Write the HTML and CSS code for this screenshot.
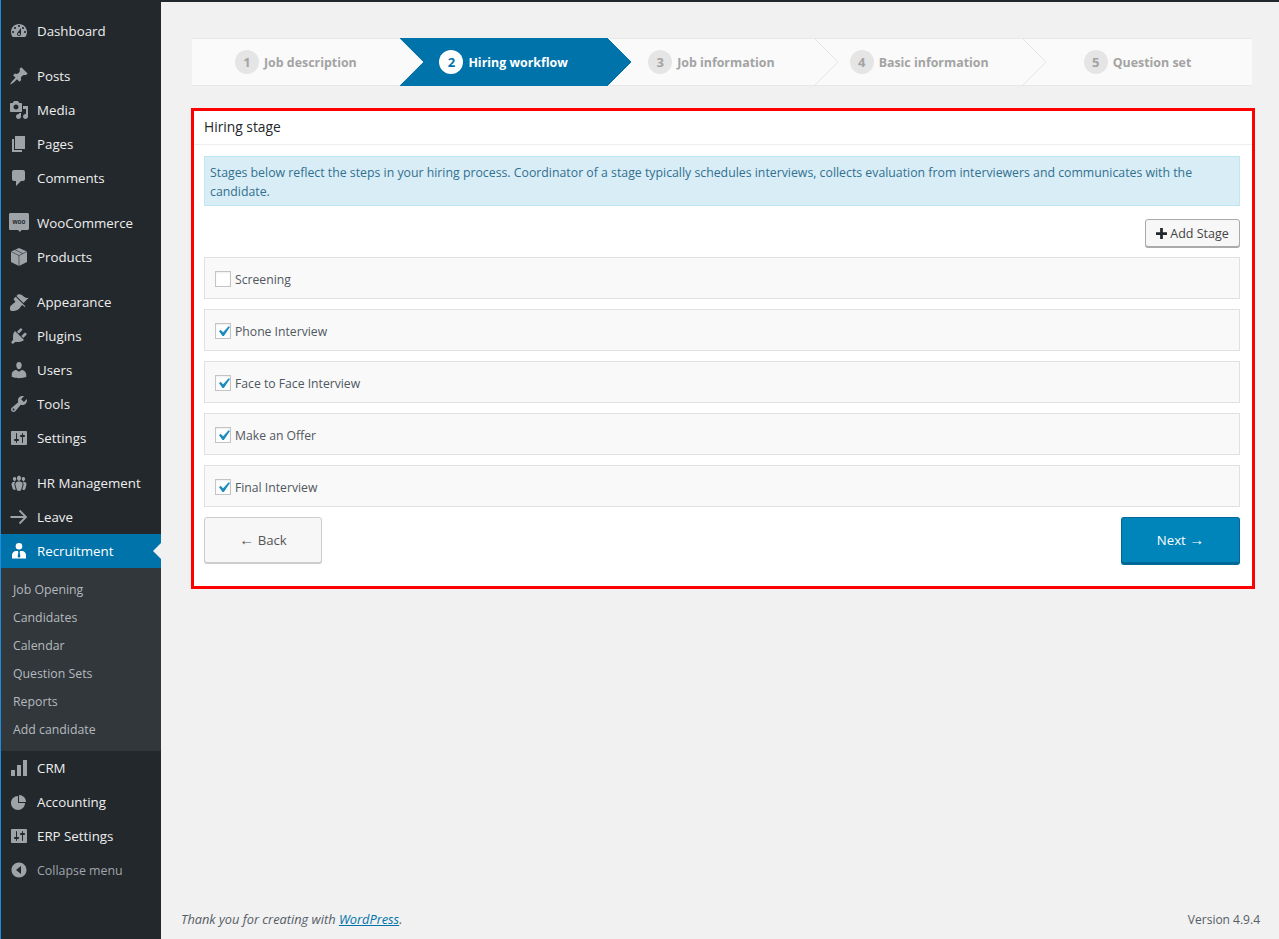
FILE: index.html
```html
<!DOCTYPE html>
<html lang="en">
<head>
<meta charset="utf-8">
<title>Hiring workflow</title>
<link rel="stylesheet" href="styles.css">
</head>
<body>
<div class="app">
  <nav class="sidebar">
    <a class="item"><svg class="ico" viewBox="0 0 20 20"><path d="M3.76 16h12.48c1.1-1.37 1.76-3.11 1.76-5 0-4.42-3.58-8-8-8s-8 3.58-8 8c0 1.89.66 3.63 1.76 5zM10 4c.55 0 1 .45 1 1s-.45 1-1 1-1-.45-1-1 .45-1 1-1zM6 6c.55 0 1 .45 1 1s-.45 1-1 1-1-.45-1-1 .45-1 1-1zm8 0c.55 0 1 .45 1 1s-.45 1-1 1-1-.45-1-1 .45-1 1-1zm-5.37 5.55L12 7v6c0 1.1-.9 2-2 2s-2-.9-2-2c0-.57.24-1.08.63-1.45zM4 10c.55 0 1 .45 1 1s-.45 1-1 1-1-.45-1-1 .45-1 1-1zm12 0c.55 0 1 .45 1 1s-.45 1-1 1-1-.45-1-1 .45-1 1-1zm-5 3c0-.55-.45-1-1-1s-1 .45-1 1 .45 1 1 1 1-.45 1-1z"/></svg>Dashboard</a>
    <div class="gap"></div>
    <a class="item"><svg class="ico" viewBox="0 0 20 20"><path d="M10.44 3.02l1.82-1.82 6.36 6.35-1.83 1.82c-1.05-.68-2.48-.57-3.41.36l-.75.75c-.92.93-1.04 2.35-.35 3.41l-1.83 1.82-2.41-2.41-2.8 2.79c-.42.42-3.38 2.71-3.8 2.29s1.86-3.39 2.28-3.81l2.79-2.79L4.1 9.36l1.83-1.82c1.05.69 2.48.57 3.4-.36l.75-.75c.93-.92 1.05-2.35.36-3.41z"/></svg>Posts</a>
    <a class="item"><svg class="ico" viewBox="0 0 20 20"><path d="M13 11V4c0-.55-.45-1-1-1h-1.67L9 1H5L3.67 3H2c-.55 0-1 .45-1 1v7c0 .55.45 1 1 1h10c.55 0 1-.45 1-1zM7 4.5c1.38 0 2.5 1.12 2.5 2.5S8.38 9.5 7 9.5 4.5 8.38 4.5 7 5.62 4.5 7 4.5zM14 6h5v10.5c0 1.38-1.12 2.5-2.5 2.5S14 17.88 14 16.5s1.12-2.5 2.5-2.5c.17 0 .34.02.5.05V9h-3V6zm-4 8.05V13h2v3.5c0 1.38-1.12 2.5-2.5 2.5S7 17.88 7 16.5 8.12 14 9.5 14c.17 0 .34.02.5.05z"/></svg>Media</a>
    <a class="item"><svg class="ico" viewBox="0 0 20 20"><path d="M6 15V2h10v13H6zm-1 1h8v2H3V5h2v11z"/></svg>Pages</a>
    <a class="item"><svg class="ico" viewBox="0 0 20 20"><path d="M5 2h9c1.1 0 2 .9 2 2v7c0 1.1-.9 2-2 2h-2l-5 5v-5H5c-1.1 0-2-.9-2-2V4c0-1.1.9-2 2-2z"/></svg>Comments</a>
    <div class="gap"></div>
    <a class="item"><svg class="ico" viewBox="0 0 20 20"><path d="M1.5 0h17c.8 0 1.5.7 1.5 1.500v14c0 .8-.7 1.500-1.500 1.500h-6l-1.500 2-2-2h-9C.7 17 0 16.300 0 15.500v-14C0 .7.7 0 1.500 0z"/><text class="woo" x="10" y="11" text-anchor="middle">woo</text></svg>WooCommerce</a>
    <a class="item"><svg class="ico" viewBox="0 0 20 20"><path d="M10 1l8 3.500v10.500l-8 4-8-4V4.500z"/><path class="cut" d="M2 4.500l8 4 8-4M10 8.500V19M6 2.800l8 3.800"/></svg>Products</a>
    <div class="gap"></div>
    <a class="item"><svg class="ico" viewBox="0 0 20 20"><path d="M14.480 11.060L7.410 3.990l1.500-1.500c.5-.56 2.300-.47 3.510.32 1.210.8 1.430 1.280 2.910 2.100 1.180.64 2.450 1.260 4.450.85zm-.71.71L6.700 4.700 4.930 6.470c-.39.39-.39 1.020 0 1.410l1.060 1.060c.39.39.39 1.030 0 1.420-.6.6-1.430 1.110-2.210 1.690-.35.26-.7.53-1.010.84C1.430 13.230.78 15.370 1 17.200c.21 1.800 2.010 2 3.790 1.790 1.840-.22 3.970-.87 5.310-2.210.31-.31.58-.66.84-1.010.58-.78 1.090-1.610 1.690-2.210.39-.39 1.030-.39 1.420 0l1.060 1.060c.39.39 1.020.39 1.410 0z"/></svg>Appearance</a>
    <a class="item"><svg class="ico" viewBox="0 0 20 20"><path d="M13.110 4.360L9.870 7.600 8 5.730l3.240-3.240c.35-.34 1.050-.2 1.560.32.52.51.66 1.210.31 1.550zm-8 1.770l.91-1.120 9.010 9.010-1.190.84c-.71.71-2.630 1.160-3.820 1.160H6.140L4.900 17.260c-.59.59-1.540.59-2.120 0-.59-.58-.59-1.530 0-2.120l1.240-1.240v-3.880c0-1.130.4-3.190 1.090-3.890zm7.260 3.970l3.240-3.240c.34-.35 1.040-.21 1.550.31.52.51.66 1.210.31 1.550l-3.240 3.250z"/></svg>Plugins</a>
    <a class="item"><svg class="ico" viewBox="0 0 20 20"><path d="M10 9.250c-2.270 0-2.730-3.440-2.730-3.440C7 4.020 7.820 2 9.970 2c2.160 0 2.980 2.020 2.710 3.810 0 0-.41 3.440-2.680 3.440zm0 2.570L12.720 10c2.390 0 4.520 2.330 4.520 4.530v2.490s-3.650 1.130-7.240 1.130c-3.650 0-7.240-1.130-7.240-1.130v-2.490c0-2.250 1.940-4.480 4.470-4.480z"/></svg>Users</a>
    <a class="item"><svg class="ico" viewBox="0 0 20 20"><path d="M16.680 9.770c-1.340 1.340-3.300 1.670-4.950.99l-5.410 6.520c-.99.99-2.590.99-3.580 0s-.99-2.590 0-3.570l6.520-5.420c-.68-1.650-.35-3.610.99-4.950 1.280-1.280 3.120-1.620 4.720-1.060l-2.890 2.890 2.820 2.820 2.860-2.870c.53 1.580.18 3.390-1.080 4.650zM3.810 16.210c.4.39 1.040.39 1.430 0 .4-.4.4-1.040 0-1.430-.39-.4-1.030-.4-1.430 0-.39.39-.39 1.030 0 1.430z"/></svg>Tools</a>
    <a class="item"><svg class="ico" viewBox="0 0 20 20"><path d="M18 16V4c0-.55-.45-1-1-1H3c-.55 0-1 .45-1 1v12c0 .55.45 1 1 1h14c.55 0 1-.45 1-1zM8 11h1c.55 0 1 .45 1 1s-.45 1-1 1H8v1.500c0 .28-.22.5-.5.5s-.5-.22-.5-.5V13H6c-.55 0-1-.45-1-1s.45-1 1-1h1V5.500c0-.28.22-.5.5-.5s.5.22.5.5V11zm5-2h-1c-.55 0-1-.45-1-1s.45-1 1-1h1V5.500c0-.28.22-.5.5-.5s.5.22.5.5V7h1c.55 0 1 .45 1 1s-.45 1-1 1h-1v5.500c0 .28-.22.5-.5.5s-.5-.22-.5-.5V9z"/></svg>Settings</a>
    <div class="gap"></div>
    <a class="item"><svg class="ico" viewBox="0 0 20 20"><path d="M8.030 4.460c-.29 1.280.55 3.460 1.970 3.460 1.410 0 2.250-2.180 1.960-3.460-.22-.98-1.080-1.630-1.960-1.630-.89 0-1.740.65-1.970 1.630zm-4.130.9c-.25 1.080.47 2.930 1.670 2.930s1.920-1.850 1.670-2.930c-.19-.83-.92-1.390-1.670-1.390s-1.480.56-1.670 1.390zm8.860 0c-.25 1.080.47 2.930 1.660 2.930 1.200 0 1.920-1.850 1.670-2.930-.19-.83-.92-1.390-1.670-1.390-.74 0-1.470.56-1.660 1.390zm-.59 11.430l1.250-4.300C14.200 10 12.710 8.470 10 8.470c-2.720 0-4.210 1.530-3.440 4.020l1.260 4.300C8.050 17.510 9 18 10 18c.98 0 1.940-.49 2.170-1.210zm-6.100-7.630c-.49.67-.96 1.830-.42 3.590l1.120 3.790c-.34.2-.77.31-1.200.31-.85 0-1.650-.41-1.850-1.030l-1.070-3.650c-.65-2.110.61-3.390 2.920-3.390.27 0 .54.02.79.06-.1.1-.2.22-.29.32zm8.350-.32c2.310 0 3.580 1.280 2.920 3.390l-1.070 3.650c-.2.62-1 1.030-1.850 1.030-.43 0-.86-.11-1.200-.31l1.110-3.790c.55-1.760.08-2.920-.42-3.590-.09-.1-.19-.22-.28-.32.25-.04.52-.06.79-.06z"/></svg>HR Management</a>
    <a class="item"><svg class="ico" viewBox="0 0 20 20"><path class="line" d="M1.500 10h15.500M10.500 3.500L17 10l-6.500 6.500"/></svg>Leave</a>
    <a class="item active"><svg class="ico" viewBox="0 0 20 20"><circle cx="10" cy="5.300" r="3.300"/><path d="M3 17.500v-3.500c0-2.200 1.800-4 4-4h6c2.200 0 4 1.800 4 4v3.500z"/><path class="tie" d="M9 10h2l-.3 1.500.7 4-1.400 1.500-1.400-1.500.7-4z"/></svg>Recruitment</a>
    <div class="submenu">
      <a class="subitem">Job Opening</a>
      <a class="subitem">Candidates</a>
      <a class="subitem">Calendar</a>
      <a class="subitem">Question Sets</a>
      <a class="subitem">Reports</a>
      <a class="subitem">Add candidate</a>
    </div>
    <a class="item"><svg class="ico" viewBox="0 0 20 20"><path d="M18 18V2h-4v16h4zm-6 0V7H8v11h4zm-6 0v-6H2v6h4z"/></svg>CRM</a>
    <a class="item"><svg class="ico" viewBox="0 0 20 20"><path d="M10 10V3c3.870 0 7 3.130 7 7h-7zM9 4v7h7c0 3.870-3.130 7-7 7s-7-3.130-7-7 3.130-7 7-7z"/></svg>Accounting</a>
    <a class="item"><svg class="ico" viewBox="0 0 20 20"><path d="M18 16V4c0-.55-.45-1-1-1H3c-.55 0-1 .45-1 1v12c0 .55.45 1 1 1h14c.55 0 1-.45 1-1zM8 11h1c.55 0 1 .45 1 1s-.45 1-1 1H8v1.500c0 .28-.22.5-.5.5s-.5-.22-.5-.5V13H6c-.55 0-1-.45-1-1s.45-1 1-1h1V5.500c0-.28.22-.5.5-.5s.5.22.5.5V11zm5-2h-1c-.55 0-1-.45-1-1s.45-1 1-1h1V5.500c0-.28.22-.5.5-.5s.5.22.5.5V7h1c.55 0 1 .45 1 1s-.45 1-1 1h-1v5.500c0 .28-.22.5-.5.5s-.5-.22-.5-.5V9z"/></svg>ERP Settings</a>
    <a class="item collapse"><svg class="ico" viewBox="0 0 20 20"><path fill-rule="evenodd" d="M10 2.500c4.140 0 7.500 3.360 7.500 7.500s-3.360 7.500-7.500 7.500-7.500-3.360-7.500-7.500 3.360-7.500 7.500-7.500zm2 3.500l-5 4 5 4V6z"/></svg>Collapse menu</a>
  </nav>

  <main class="main">
    <ol class="stepper">
      <li class="step"><span class="num">1</span><span class="label">Job description</span><svg class="chev" viewBox="0 0 25 48"><path d="M0 0l24 24L0 48"/></svg></li>
      <li class="step current"><span class="num">2</span><span class="label">Hiring workflow</span><svg class="chev" viewBox="0 0 25 48"><path d="M0 0l24 24L0 48"/></svg></li>
      <li class="step"><span class="num">3</span><span class="label">Job information</span><svg class="chev" viewBox="0 0 25 48"><path d="M0 0l24 24L0 48"/></svg></li>
      <li class="step"><span class="num">4</span><span class="label">Basic information</span><svg class="chev" viewBox="0 0 25 48"><path d="M0 0l24 24L0 48"/></svg></li>
      <li class="step last"><span class="num">5</span><span class="label">Question set</span></li>
    </ol>

    <section class="panel">
      <h2 class="panel-title">Hiring stage</h2>
      <div class="panel-body">
        <p class="notice">Stages below reflect the steps in your hiring process. Coordinator of a stage typically schedules interviews, collects evaluation from interviewers and communicates with the candidate.</p>
        <div class="tools">
          <button class="btn-add"><svg class="plus" viewBox="0 0 12 12"><path d="M4.500 0h3v4.500H12v3H7.500V12h-3V7.500H0v-3h4.500z"/></svg>Add Stage</button>
        </div>
        <ul class="stages">
          <li class="stage"><span class="box"></span>Screening</li>
          <li class="stage"><span class="box"><svg class="tick" viewBox="0 0 20 20"><path d="M14.830 4.890l1.340.94-5.810 8.380H9.020L5.780 9.670l1.340-1.250 2.570 2.400z"/></svg></span>Phone Interview</li>
          <li class="stage"><span class="box"><svg class="tick" viewBox="0 0 20 20"><path d="M14.830 4.890l1.340.94-5.810 8.380H9.020L5.780 9.670l1.340-1.250 2.570 2.400z"/></svg></span>Face to Face Interview</li>
          <li class="stage"><span class="box"><svg class="tick" viewBox="0 0 20 20"><path d="M14.830 4.890l1.340.94-5.810 8.380H9.020L5.780 9.670l1.340-1.250 2.570 2.400z"/></svg></span>Make an Offer</li>
          <li class="stage"><span class="box"><svg class="tick" viewBox="0 0 20 20"><path d="M14.830 4.890l1.340.94-5.810 8.380H9.020L5.780 9.670l1.340-1.250 2.570 2.400z"/></svg></span>Final Interview</li>
        </ul>
        <div class="actions">
          <button class="btn-back"><span class="arrow">←</span> Back</button>
          <button class="btn-next">Next <span class="arrow">→</span></button>
        </div>
      </div>
    </section>

    <footer class="footer">
      <span class="thanks">Thank you for creating with <a class="wp-link">WordPress</a>.</span>
      <span class="version">Version 4.9.4</span>
    </footer>
  </main>
</div>
</body>
</html>
```
FILE: styles.css
```css
* { box-sizing: border-box; }
html, body { margin: 0; padding: 0; }
body {
  background: #f1f1f1;
  color: #444;
  font-family: "Open Sans", "Noto Sans", "Liberation Sans", sans-serif;
  font-size: 13px;
  overflow: hidden;
}
.app { display: flex; height: 939px; }

/* Sidebar */
.sidebar {
  width: 161px;
  flex: none;
  background: #23282d;
  border-left: 1px solid #1e8cdc;
  padding-top: 14px;
  display: flex;
  flex-direction: column;
}
.gap { height: 11px; flex: none; }
.item {
  position: relative;
  height: 34px;
  flex: none;
  display: flex;
  align-items: center;
  gap: 8px;
  padding-left: 8px;
  color: #eee;
  font-size: 13.300px;
}
.ico { width: 20px; height: 20px; flex: none; fill: #9ea3a8; }
.ico .line { fill: none; stroke: #9ea3a8; stroke-width: 1.800; }
.ico .cut { fill: none; stroke: #23282d; stroke-width: .6; }
.ico .woo { fill: #23282d; font: 700 6.500px "Liberation Sans", sans-serif; }
.active { background: #0073aa; color: #fff; }
.active .ico { fill: #fff; }
.active .ico .tie { fill: #0073aa; }
.active::after {
  content: "";
  position: absolute;
  right: 0;
  top: 9px;
  border: 8px solid transparent;
  border-left-width: 0;
  border-right-color: #f1f1f1;
}
.submenu {
  background: #32373c;
  padding: 7px 0 7px;
  height: 183px;
  flex: none;
}
.subitem {
  display: flex;
  align-items: center;
  height: 28px;
  padding-left: 12px;
  color: #b4b9be;
  font-size: 12.300px;
}
.collapse { color: #a0a5aa; font-size: 12.400px; }

/* Main */
.main {
  flex: 1;
  min-width: 0;
  border-top: 2px solid #23282d;
  padding: 36px 24px 0 30px;
  display: flex;
  flex-direction: column;
}

/* Stepper */
.stepper {
  list-style: none;
  margin: 0 3px 22px 1px;
  padding: 0;
  height: 48px;
  flex: none;
  display: flex;
  background: #fafafa;
  box-shadow: inset 0 1px #e8e8e8, inset 0 -1px #e8e8e8;
}
.step {
  position: relative;
  flex: 0 0 207.75px;
  display: flex;
  align-items: center;
  justify-content: center;
  gap: 5px;
  color: #a3a3a3;
  font-weight: 700;
  font-size: 12.400px;
}
.step.last { flex: 1; }
.num {
  width: 24px;
  height: 24px;
  flex: none;
  border-radius: 50%;
  background: #e5e5e5;
  display: flex;
  align-items: center;
  justify-content: center;
  font-size: 13px;
}
.chev {
  position: absolute;
  left: calc(100% - 1px);
  top: 0;
  width: 25px;
  height: 48px;
  z-index: 2;
  fill: #fafafa;
  stroke: #e5e5e5;
  stroke-width: 1;
}
.current { background: #0073aa; color: #fff; }
.current .num { background: #fff; color: #0073aa; }
.current .chev { fill: #0073aa; stroke: #0073aa; }

/* Panel */
.panel {
  background: #fff;
  border: 3px solid #f00;
  height: 481px;
  flex: none;
}
.panel-title {
  margin: 0;
  height: 34px;
  padding: 0 10px 2px;
  display: flex;
  align-items: center;
  border-bottom: 1px solid #eee;
  font-size: 13.800px;
  font-weight: 400;
  color: #23282d;
}
.panel-body { padding: 11px 12px 0 10px; }
.notice {
  margin: 0 0 13px;
  height: 50px;
  padding: 6px 5px;
  background: #d9edf7;
  border: 1px solid #bce8f1;
  color: #31708f;
  font-size: 12.300px;
  line-height: 19px;
}
.tools { display: flex; justify-content: flex-end; margin-bottom: 10px; }
button { font-family: inherit; cursor: pointer; }
.btn-add {
  height: 28px;
  width: 95px;
  padding: 0;
  display: flex;
  align-items: center;
  justify-content: center;
  gap: 3px;
  background: #f7f7f7;
  border: 1px solid #aaa;
  border-radius: 3px;
  box-shadow: 0 1px 0 #aaa;
  color: #444;
  font-size: 12.500px;
}
.plus { width: 11px; height: 11px; fill: #23282d; }
.stages {
  list-style: none;
  margin: 0 0 10px;
  padding: 0;
  display: grid;
  gap: 10px;
}
.stage {
  height: 42px;
  display: flex;
  align-items: center;
  gap: 4px;
  padding: 2px 0 0 10px;
  background: #f9f9f9;
  border: 1px solid #e1e1e1;
  color: #50575e;
  font-size: 12.200px;
}
.box {
  width: 16px;
  height: 16px;
  flex: none;
  background: #fff;
  border: 1px solid #c4c4c4;
  display: flex;
  align-items: center;
  justify-content: center;
  box-shadow: inset 0 1px 2px rgba(0,0,0,.07);
}
.tick { width: 21px; height: 21px; flex: none; fill: #1e8cbe; }
.actions { display: flex; justify-content: space-between; align-items: flex-start; }
.btn-back {
  width: 118px;
  height: 46px;
  background: #f7f7f7;
  border: 1px solid #ccc;
  border-radius: 3px;
  box-shadow: 0 1px 0 #ccc;
  color: #555;
  font-size: 13.200px;
}
.btn-next {
  width: 119px;
  height: 48px;
  background: #0085ba;
  border: 1px solid #006799;
  border-bottom-width: 3px;
  border-radius: 3px;
  color: #fff;
  font-size: 13.200px;
}
.arrow { font-size: 15px; line-height: 1; }

/* Footer */
.footer {
  margin-top: auto;
  margin-left: -10px;
  margin-right: -5px;
  height: 29px;
  display: flex;
  justify-content: space-between;
  color: #555d66;
  font-size: 12.800px;
}
.version { font-size: 12px; padding-top: 1px; }
.thanks { font-style: italic; }
.wp-link { color: #0073aa; text-decoration: underline; }
```
